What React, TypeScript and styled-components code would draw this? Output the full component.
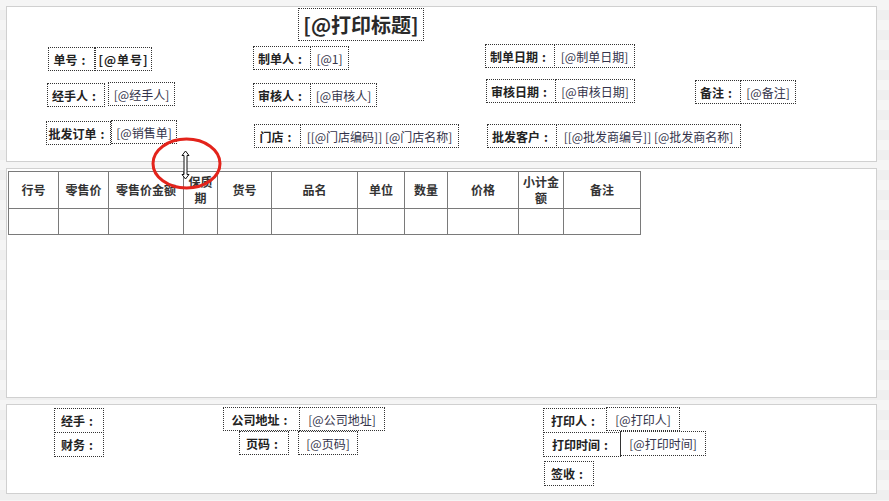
import React from "react";
import styled, { createGlobalStyle } from "styled-components";

const GlobalStyle = createGlobalStyle`
  html, body {
    margin: 0;
    padding: 0;
  }
  body {
    background: repeating-linear-gradient(180deg, #f5f5f5 0 10px, #efefef 10px 20px);
    font-family: "Noto Sans CJK SC", "Noto Sans", sans-serif;
    color: #333;
  }
`;

const Page = styled.div`
  position: relative;
  width: 889px;
  height: 501px;
  box-sizing: border-box;
  padding: 6px 12px 0 6px;
  display: flex;
  flex-direction: column;
  gap: 6px;
`;

const Panel = styled.div<{ $h: number }>`
  position: relative;
  height: ${(p) => p.$h}px;
  box-sizing: border-box;
  background: #fff;
  border: 1px solid #d0d0d0;
`;

const TablePanel = styled(Panel)`
  padding: 1px;
`;

// a field placed on the design canvas
const Slot = styled.div<{ $x: number; $y: number; $w: number; $h: number; $kind: "label" | "value" | "key" }>`
  position: absolute;
  left: ${(p) => p.$x}px;
  top: ${(p) => p.$y}px;
  width: ${(p) => p.$w}px;
  height: ${(p) => p.$h}px;
  box-sizing: border-box;
  border: 1px dotted #333;
  display: flex;
  align-items: center;
  justify-content: center;
  white-space: nowrap;
  font-size: 12px;
  font-weight: ${(p) => (p.$kind === "value" ? 400 : 700)};
  letter-spacing: ${(p) => (p.$kind === "key" ? "1px" : "0")};
  color: ${(p) => (p.$kind === "value" ? "#33334a" : "#222")};
`;

// full-width colon, centred in its em box as in the designer font
const Colon = styled.span`
  display: inline-block;
  width: 1em;
  text-align: center;
`;

const Title = styled.div`
  position: absolute;
  left: 291px;
  top: 1px;
  width: 126px;
  height: 33px;
  box-sizing: border-box;
  border: 1px dotted #333;
  display: flex;
  align-items: center;
  justify-content: center;
  font-size: 20px;
  font-weight: 700;
  color: #2a2a2a;
  white-space: nowrap;
`;

const Grid = styled.table`
  border-collapse: collapse;
  table-layout: fixed;
  width: 632px;
  margin-top: 1px;
  font-size: 12px;
`;

const HeadCell = styled.th`
  height: 36px;
  padding: 0;
  border: 1px solid #7a7a7a;
  font-weight: 700;
  line-height: 16px;
  color: #333;
  text-align: center;
`;

const BodyCell = styled.td`
  height: 25px;
  padding: 0;
  border: 1px solid #7a7a7a;
`;

const Overlay = styled.svg`
  position: absolute;
  left: 150px;
  top: 136px;
  pointer-events: none;
`;

type Field = [string, number, number, number, number, "label" | "value" | "key"];

// coordinates are relative to the panel's inner box
const headerFields: Field[] = [
  ["单号：", 41, 40, 47, 24, "label"],
  ["[@单号]", 88, 40, 57, 24, "key"],
  ["制单人：", 246, 39, 58, 24, "label"],
  ["[@1]", 303, 39, 39, 24, "value"],
  ["制单日期：", 478, 37, 70, 24, "label"],
  ["[@制单日期]", 547, 37, 81, 24, "value"],
  ["经手人：", 40, 76, 58, 24, "label"],
  ["[@经手人]", 101, 75, 67, 24, "value"],
  ["审核人：", 246, 76, 58, 24, "label"],
  ["[@审核人]", 303, 76, 67, 24, "value"],
  ["审核日期：", 479, 72, 70, 24, "label"],
  ["[@审核日期]", 548, 72, 80, 24, "value"],
  ["备注：", 688, 73, 46, 24, "label"],
  ["[@备注]", 733, 73, 56, 24, "value"],
  ["批发订单：", 39, 114, 65, 24, "label"],
  ["[@销售单]", 104, 113, 66, 24, "value"],
  ["门店：", 247, 117, 47, 24, "label"],
  ["[[@门店编码]] [@门店名称]", 293, 117, 159, 24, "value"],
  ["批发客户：", 480, 117, 70, 24, "label"],
  ["[[@批发商编号]] [@批发商名称]", 549, 117, 185, 24, "value"],
];

const footerFields: Field[] = [
  ["经手：", 47, 3, 50, 25, "label"],
  ["财务：", 47, 27, 50, 25, "label"],
  ["公司地址：", 216, 2, 77, 24, "label"],
  ["[@公司地址]", 292, 2, 86, 24, "value"],
  ["页码：", 232, 26, 50, 24, "label"],
  ["[@页码]", 291, 26, 60, 24, "value"],
  ["打印人：", 536, 3, 64, 25, "label"],
  ["[@打印人]", 599, 2, 74, 24, "value"],
  ["打印时间：", 536, 27, 78, 25, "label"],
  ["[@打印时间]", 613, 26, 86, 25, "value"],
  ["签收：", 537, 56, 50, 25, "label"],
];

const columns: [string, number][] = [
  ["行号", 50],
  ["零售价", 50],
  ["零售价金额", 75],
  ["保质期", 34],
  ["货号", 54],
  ["品名", 86],
  ["单位", 47],
  ["数量", 43],
  ["价格", 71],
  ["小计金额", 45],
  ["备注", 77],
];

const renderText = (text: string) =>
  text.endsWith("：") ? (
    <>
      {text.slice(0, -1)}
      <Colon>:</Colon>
    </>
  ) : (
    text
  );

const renderFields = (fields: Field[]) =>
  fields.map(([text, x, y, w, h, kind]) => (
    <Slot key={text + x + y} $x={x} $y={y} $w={w} $h={h} $kind={kind}>
      {renderText(text)}
    </Slot>
  ));

const App: React.FC = () => {
  return (
    <>
      <GlobalStyle />
      <Page>
        <Panel $h={156}>
          <Title>[@打印标题]</Title>
          {renderFields(headerFields)}
        </Panel>
        <TablePanel $h={230}>
          <Grid>
            <colgroup>
              {columns.map(([name, w]) => (
                <col key={name} style={{ width: w }} />
              ))}
            </colgroup>
            <thead>
              <tr>
                {columns.map(([name]) => (
                  <HeadCell key={name}>{name}</HeadCell>
                ))}
              </tr>
            </thead>
            <tbody>
              <tr>
                {columns.map(([name]) => (
                  <BodyCell key={name} />
                ))}
              </tr>
            </tbody>
          </Grid>
        </TablePanel>
        <Panel $h={90}>{renderFields(footerFields)}</Panel>
        <Overlay width="74" height="56" viewBox="0 0 74 56">
          <ellipse cx="36.5" cy="27.5" rx="33.5" ry="24.5" fill="none" stroke="#e3231b" strokeWidth="3" />
          <path
            d="M32 19.5 L35.5 15 L39 19.5 L37 19.5 L37 38.5 L39 38.5 L35.5 43 L32 38.5 L34 38.5 L34 19.5 Z"
            fill="#fff"
            stroke="#111"
            strokeWidth="1"
            strokeLinejoin="miter"
          />
        </Overlay>
      </Page>
    </>
  );
};

export default App;
